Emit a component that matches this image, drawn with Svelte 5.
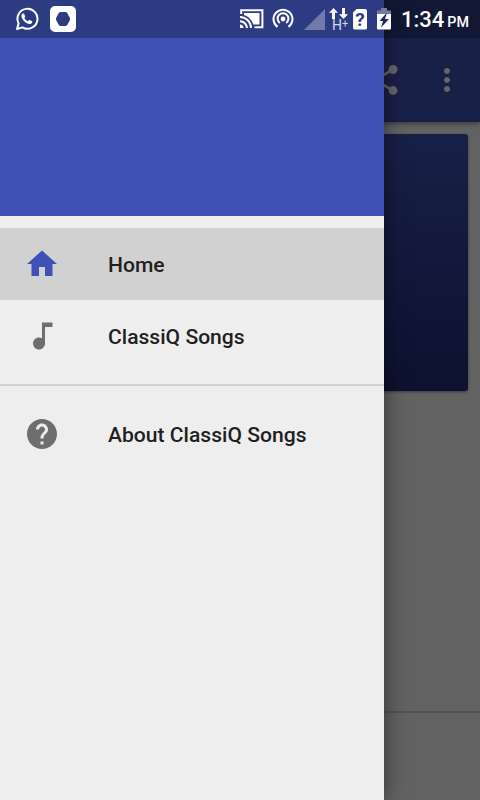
<script lang="ts">
  interface MenuItem {
    label: string;
    icon: string;
    group: number;
  }

  const icons: Record<string, string> = {
    home: 'M10 20v-6h4v6h5v-8h3L12 3 2 12h3v8z',
    note: 'M12 3v10.55c-.59-.34-1.27-.55-2-.55-2.21 0-4 1.79-4 4s1.79 4 4 4 4-1.79 4-4V6h5V3h-7z',
    help: 'M12 2C6.48 2 2 6.48 2 12s4.48 10 10 10 10-4.48 10-10S17.52 2 12 2zm1 17h-2v-2h2v2zm2.07-7.75l-.9.92C13.45 12.9 13 13.5 13 15h-2v-.5c0-1.1.45-2.1 1.17-2.83l1.24-1.26c.37-.36.59-.86.59-1.41 0-1.1-.9-2-2-2s-2 .9-2 2H8c0-2.21 1.79-4 4-4s4 1.79 4 4c0 .88-.36 1.68-.93 2.25z'
  };

  const items: MenuItem[] = [
    { label: 'Home', icon: 'home', group: 0 },
    { label: 'ClassiQ Songs', icon: 'note', group: 0 },
    { label: 'About ClassiQ Songs', icon: 'help', group: 1 }
  ];

  let selected = $state('Home');
</script>

<div class="screen">
  <div class="app-bar">
    <svg class="action" viewBox="0 0 24 24">
      <path d="M18 16.08c-.76 0-1.44.3-1.96.77L8.91 12.7c.05-.23.09-.46.09-.7s-.04-.47-.09-.7l7.05-4.11c.54.5 1.25.81 2.04.81 1.66 0 3-1.34 3-3s-1.34-3-3-3-3 1.34-3 3c0 .24.04.47.09.7L8.04 9.81C7.5 9.31 6.79 9 6 9c-1.66 0-3 1.34-3 3s1.34 3 3 3c.79 0 1.5-.31 2.04-.81l7.12 4.16c-.05.21-.08.43-.08.65 0 1.61 1.31 2.92 2.92 2.92s2.92-1.31 2.92-2.92-1.31-2.92-2.92-2.92z" />
    </svg>
    <svg class="action" viewBox="0 0 24 24">
      <path d="M12 8c1.1 0 2-.9 2-2s-.9-2-2-2-2 .9-2 2 .9 2 2 2zm0 2c-1.1 0-2 .9-2 2s.9 2 2 2 2-.9 2-2-.9-2-2-2zm0 6c-1.1 0-2 .9-2 2s.9 2 2 2 2-.9 2-2-.9-2-2-2z" />
    </svg>
  </div>
  <main>
    <div class="card"></div>
  </main>
  <div class="bottom-bar"></div>

  <div class="scrim"></div>

  <nav class="drawer">
    <div class="drawer-header"></div>
    <ul>
      {#each items as item, i}
        {#if i > 0 && item.group !== items[i - 1].group}
          <li class="divider"></li>
        {/if}
        <li>
          <button class:selected={selected === item.label} onclick={() => (selected = item.label)}>
            <svg viewBox="0 0 24 24"><path d={icons[item.icon]} /></svg>
            <span>{item.label}</span>
          </button>
        </li>
      {/each}
    </ul>
  </nav>

  <div class="status-bar">
    <svg class="whatsapp" width="24" height="24" viewBox="0 0 24 24">
      <path d="M2 22l1.6-5.6A10 10 0 1 1 7.4 20.4z" fill="none" stroke="#fff" stroke-width="2" stroke-linejoin="round" />
      <path d="M8.5 6.6c-.5-.1-1.1.1-1.5.7-.9 1.2-.7 3 .6 5 1.7 2.6 4.2 4.5 6.6 4.8 1.5.1 2.9-.8 3.1-2.3 0-.5-.2-.7-.5-.8l-2.1-1c-.4-.2-.6-.1-.9.3l-.8.9c-1.6-.6-2.9-1.8-3.7-3.3l.7-.9c.2-.3.2-.5.1-.8l-.9-2.2c-.2-.3-.4-.4-.7-.4z" fill="#fff" />
    </svg>
    <svg class="recorder" width="26" height="26" viewBox="0 0 26 26">
      <path fill-rule="evenodd" d="M5 0h16a5 5 0 0 1 5 5v16a5 5 0 0 1-5 5H5a5 5 0 0 1-5-5V5a5 5 0 0 1 5-5zM10.5 6Q9.500 6 8.800 7L6.300 11.500q-.7 1.500 0 3L8.800 19Q9.500 20 10.500 20h5q1 0 1.700-1l2.500-4.500q.7-1.500 0-3L17.200 7Q16.500 6 15.500 6z" fill="#fff" />
    </svg>
    <span class="spacer"></span>
    <svg class="cast" width="24" height="20" viewBox="0 0 24 20">
      <g fill="none" stroke="#fff">
        <path d="M1.2 5V1.2h21.2v17H14.5" stroke-width="2" />
        <path d="M0 8a11 11 0 0 1 11 11M0 12.2a7 7 0 0 1 7 6.8" stroke-width="2" />
      </g>
      <path d="M0 15.5a3.5 3.5 0 0 1 3.5 3.5H0zM4 4h15.500v11.500h-6.200A14 14 0 0 0 4 6z" fill="#fff" />
    </svg>
    <svg class="hotspot" width="22" height="22" viewBox="0 0 22 22">
      <g fill="none" stroke="#fff" stroke-width="2">
        <path d="M5.5 18.9a9.5 9.5 0 1 1 11 0" />
        <path d="M7.9 15a5.4 5.4 0 1 1 6.2 0" />
      </g>
      <circle cx="11" cy="11" r="2.4" fill="#fff" />
    </svg>
    <svg class="signal" width="21" height="21" viewBox="0 0 21 21">
      <path d="M0 21L21 0v21z" fill="#fff" fill-opacity=".32" />
    </svg>
    <div class="network">
      <svg width="19" height="11" viewBox="0 0 19 11">
        <path d="M4.5 0L9 4.8H6V11H3V4.8H0zM14.5 11L10 6.2h3V0h3v6.2h3z" fill="#fff" />
      </svg>
      <span>H<sup>+</sup></span>
    </div>
    <div class="sim">?</div>
    <svg class="battery" width="14" height="22" viewBox="0 0 14 22">
      <path d="M0 2.5h4V0h6v2.5h4V7H0z" fill="#777c9c" />
      <path d="M0 6h14v14.5a1 1 0 0 1-1 1H1a1 1 0 0 1-1-1z" fill="#fff" />
      <path d="M10 4.500L2.500 13H6l-2 6.500L12 11H8z" fill="#20295d" />
    </svg>
    <span class="time">1:34</span>
    <span class="meridiem">PM</span>
  </div>
</div>

<style>
  :global(body) {
    margin: 0;
  }

  .screen {
    position: relative;
    display: flex;
    flex-direction: column;
    width: 480px;
    height: 800px;
    overflow: hidden;
    background: #f6f6f6;
    font-family: Roboto, sans-serif;
  }

  .app-bar {
    display: flex;
    justify-content: flex-end;
    align-items: center;
    gap: 27px;
    height: 84px;
    padding: 38px 15px 0 0;
    background: #3f51b5;
    box-shadow: 0 2px 5px rgba(0, 0, 0, 0.4);
  }

  .action {
    width: 36px;
    height: 36px;
    fill: #fff;
  }

  main {
    flex: 1;
    padding: 12px;
  }

  .card {
    height: 257px;
    border-radius: 3px;
    background: linear-gradient(#3e51b4, #202c75);
    box-shadow: 0 1px 3px rgba(0, 0, 0, 0.4);
  }

  .bottom-bar {
    height: 87px;
    border-top: 2px solid #d2d2d2;
  }

  .scrim {
    position: absolute;
    inset: 0;
    background: rgba(0, 0, 0, 0.6);
  }

  .drawer {
    position: absolute;
    top: 0;
    bottom: 0;
    left: 0;
    width: 384px;
    background: #eee;
    box-shadow: 0 0 20px rgba(0, 0, 0, 0.5);
  }

  .drawer-header {
    height: 216px;
    background: #3e51b4;
  }

  ul {
    list-style: none;
    margin: 0;
    padding: 12px 0;
  }

  .divider {
    height: 2px;
    margin: 12px 0;
    background: #d2d2d2;
  }

  button {
    display: flex;
    align-items: center;
    gap: 48px;
    width: 100%;
    height: 72px;
    padding: 0 24px;
    border: none;
    background: none;
    color: #1f1f1f;
    font-family: inherit;
    font-size: 21.1px;
    font-weight: 500;
    line-height: 24px;
    text-align: left;
  }

  button span {
    padding-top: 2px;
  }

  button svg {
    width: 36px;
    height: 36px;
    fill: #6e6e6e;
  }

  button.selected {
    background: #d1d1d1;
  }

  button.selected svg {
    fill: #3f51b5;
  }

  .status-bar {
    position: absolute;
    top: 0;
    left: 0;
    right: 0;
    display: flex;
    align-items: center;
    box-sizing: border-box;
    height: 38px;
    padding: 0 11px 0 15px;
    background: rgba(0, 0, 0, 0.27);
    color: #fff;
    white-space: nowrap;
  }

  .status-bar svg {
    flex: none;
  }

  .recorder {
    margin-left: 11px;
  }

  .spacer {
    flex: 1;
  }

  .hotspot {
    margin-left: 8px;
  }

  .signal {
    margin-left: 10px;
  }

  .network {
    display: flex;
    flex-direction: column;
    align-items: center;
    width: 19px;
    margin-left: 4px;
    font-size: 14px;
    line-height: 12px;
  }

  .network span {
    padding-left: 3px;
    color: #d5d8e8;
  }

  .network sup {
    font-size: 11px;
    line-height: 0;
    vertical-align: 3px;
  }

  .sim {
    width: 14px;
    height: 21px;
    margin-left: 5px;
    border-radius: 2px;
    background: #fff;
    clip-path: polygon(4px 0, 100% 0, 100% 100%, 0 100%, 0 4px);
    color: #2d3a82;
    font-size: 19px;
    font-weight: 700;
    line-height: 22px;
    text-align: center;
  }

  .battery {
    margin-left: 10px;
  }

  .time {
    margin: 1px 0 0 10px;
    font-size: 22px;
    font-weight: 500;
  }

  .meridiem {
    margin: 6px 0 0 3px;
    font-size: 14.3px;
    font-weight: 500;
  }
</style>
